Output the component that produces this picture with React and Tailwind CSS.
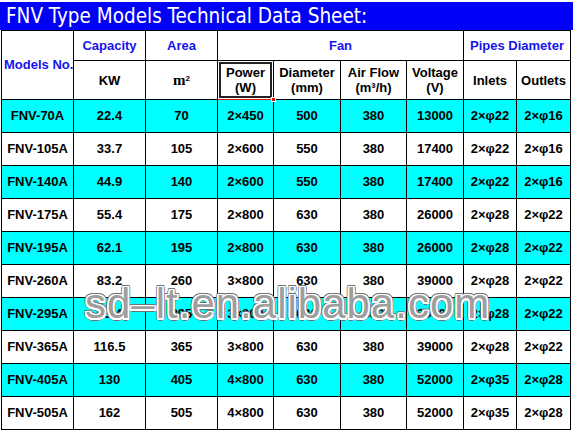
const rows = [
  ["FNV-70A", "22.4", "70", "2×450", "500", "380", "13000", "2×φ22", "2×φ16"],
  ["FNV-105A", "33.7", "105", "2×600", "550", "380", "17400", "2×φ22", "2×φ16"],
  ["FNV-140A", "44.9", "140", "2×600", "550", "380", "17400", "2×φ22", "2×φ16"],
  ["FNV-175A", "55.4", "175", "2×800", "630", "380", "26000", "2×φ28", "2×φ22"],
  ["FNV-195A", "62.1", "195", "2×800", "630", "380", "26000", "2×φ28", "2×φ22"],
  ["FNV-260A", "83.2", "260", "3×800", "630", "380", "39000", "2×φ28", "2×φ22"],
  ["FNV-295A", "93.4", "295", "3×800", "630", "380", "39000", "2×φ28", "2×φ22"],
  ["FNV-365A", "116.5", "365", "3×800", "630", "380", "39000", "2×φ28", "2×φ22"],
  ["FNV-405A", "130", "405", "4×800", "630", "380", "52000", "2×φ35", "2×φ28"],
  ["FNV-505A", "162", "505", "4×800", "630", "380", "52000", "2×φ35", "2×φ28"],
];

const widths = [72, 72, 72, 56, 67, 66, 57, 53, 54];

const blueHead = "border border-black text-[#1414ee] text-center align-middle";
const blackHead = "border border-black text-black text-center align-middle leading-[15px]";

export default function App() {
  return (
    <div className="relative w-[573px] h-[431px] bg-white overflow-hidden font-['Liberation_Sans',Arial,sans-serif]">
      <div className="pt-[2px]">
        <div className="h-[28px] bg-[#0000f6] text-white font-['DejaVu_Sans_Condensed','Noto_Sans',sans-serif] text-[20.5px] leading-[28px] pl-[6px] whitespace-nowrap">
          FNV Type Models Technical Data Sheet:
        </div>
      </div>

      <table className="ml-[1px] border-collapse table-fixed w-[569px] text-[13px] font-bold">
        <colgroup>
          {widths.map((w, i) => (
            <col key={i} style={{ width: w }} />
          ))}
        </colgroup>
        <thead>
          <tr className="h-[30px]">
            <th rowSpan={2} className={blueHead + " text-left pl-[2px] pr-0 whitespace-nowrap"}>
              Models No.
            </th>
            <th className={blueHead}>Capacity</th>
            <th className={blueHead}>Area</th>
            <th colSpan={4} className={blueHead}>Fan</th>
            <th colSpan={2} className={blueHead + " whitespace-nowrap"}>Pipes Diameter</th>
          </tr>
          <tr className="h-[39px]">
            <th className={blackHead}>KW</th>
            <th className={blackHead}>
              <span className="font-['Liberation_Serif',serif] text-[15px]">m</span>
              <sup className="text-[8px]">2</sup>
            </th>
            <th className={blackHead + " relative"}>
              Power
              <br />
              (W)
              <div className="absolute inset-[1px] border-2 border-[#222] pointer-events-none" />
              <div className="absolute left-0 right-0 bottom-[-1px] h-[1px] bg-[#e01010]" />
              <div className="absolute right-[-3px] bottom-[-3px] w-[5px] h-[5px] bg-[#e01010] border border-white" />
            </th>
            <th className={blackHead}>
              Diameter
              <br />
              (mm)
            </th>
            <th className={blackHead}>
              Air Flow
              <br />
              (m³/h)
            </th>
            <th className={blackHead}>
              Voltage
              <br />
              (V)
            </th>
            <th className={blackHead}>Inlets</th>
            <th className={blackHead}>Outlets</th>
          </tr>
        </thead>
        <tbody>
          {rows.map((r, i) => (
            <tr key={r[0]} className={i % 2 === 0 ? "h-[33px] bg-[#00ffff]" : "h-[33px] bg-white"}>
              {r.map((c, j) => (
                <td key={j} className="border border-black text-center align-middle text-black whitespace-nowrap">
                  {c}
                </td>
              ))}
            </tr>
          ))}
        </tbody>
      </table>

      {/* watermark */}
      <div className="absolute left-[85px] top-[283px] text-[42px] leading-none font-normal tracking-[1px] whitespace-nowrap pointer-events-none select-none text-[#9e9e9e] [text-shadow:1.5px_0_0_#fff,-1.5px_0_0_#fff,0_1.5px_0_#fff,0_-1.5px_0_#fff,1.5px_1.5px_0_#fff,-1.5px_-1.5px_0_#fff,1.5px_-1.5px_0_#fff,-1.5px_1.5px_0_#fff,2.5px_0_0_#707070,-2.5px_0_0_#707070,0_2.5px_0_#707070,0_-2.5px_0_#707070,2px_2px_0_#707070,-2px_-2px_0_#707070,2px_-2px_0_#707070,-2px_2px_0_#707070]">
        sd–lt.en.alibaba.com
      </div>
    </div>
  );
}
